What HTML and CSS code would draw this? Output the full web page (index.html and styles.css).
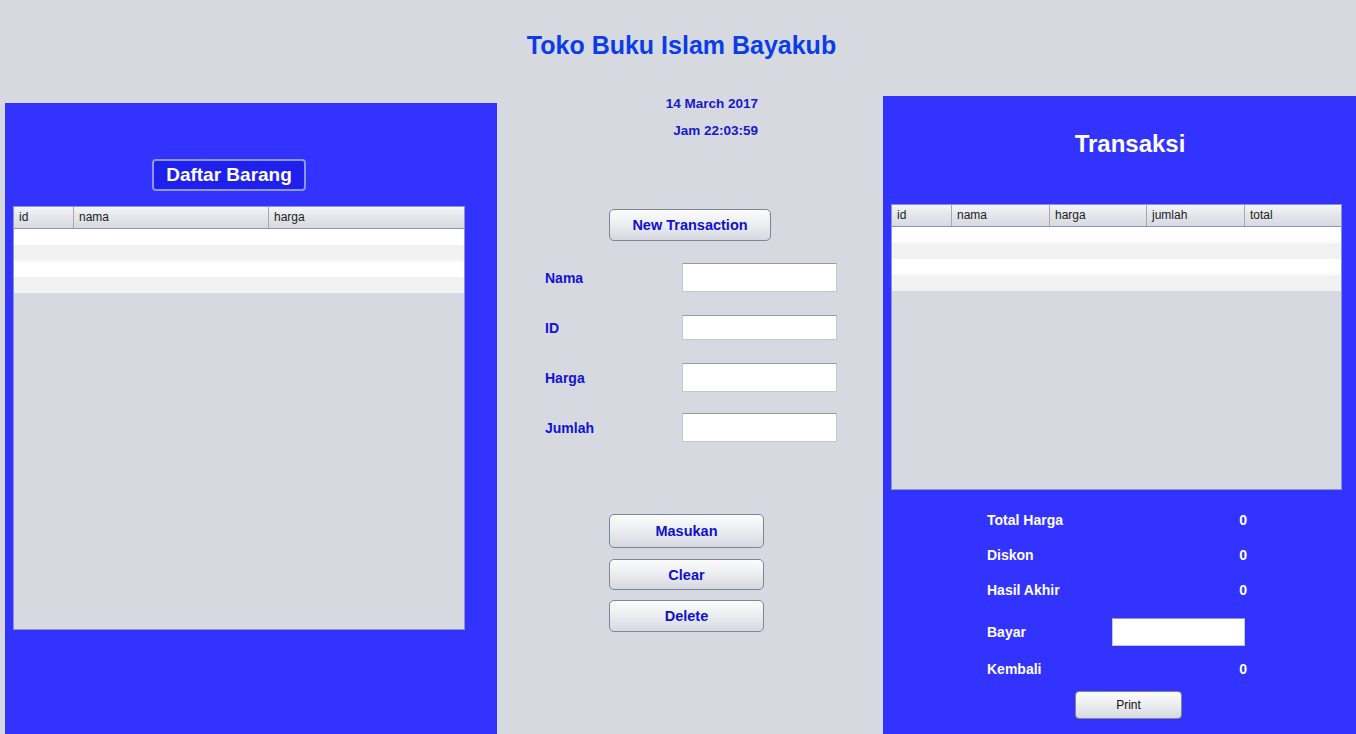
FILE: index.html
```html
<!DOCTYPE html>
<html>
<head>
<meta charset="utf-8">
<link rel="stylesheet" href="styles.css">
</head>
<body>
<div class="app">
  <header class="topbar">
    <h1 class="title">Toko Buku Islam Bayakub</h1>
  </header>
  <div class="main">
    <section class="panel panel-left">
      <div class="badge-row"><div class="badge">Daftar Barang</div></div>
      <div class="table table-left">
        <div class="thead">
          <div class="th w60">id</div>
          <div class="th w195">nama</div>
          <div class="th grow">harga</div>
        </div>
        <div class="tbody">
          <div class="tr"></div>
          <div class="tr alt"></div>
          <div class="tr"></div>
          <div class="tr alt"></div>
        </div>
      </div>
    </section>

    <section class="center">
      <div class="datetime">
        <div class="date">14 March 2017</div>
        <div class="time">Jam 22:03:59</div>
      </div>
      <button class="btn btn-new">New Transaction</button>
      <div class="form">
        <div class="frow"><span class="flabel">Nama</span><span class="input h29"></span></div>
        <div class="frow gap23"><span class="flabel">ID</span><span class="input h25"></span></div>
        <div class="frow gap23"><span class="flabel">Harga</span><span class="input h29"></span></div>
        <div class="frow gap21"><span class="flabel">Jumlah</span><span class="input h29"></span></div>
      </div>
      <div class="actions">
        <button class="btn btn-act h34">Masukan</button>
        <button class="btn btn-act h31 mt11">Clear</button>
        <button class="btn btn-act h32 mt10">Delete</button>
      </div>
    </section>

    <section class="panel panel-right">
      <h2 class="rtitle">Transaksi</h2>
      <div class="table table-right">
        <div class="thead">
          <div class="th w60">id</div>
          <div class="th w98">nama</div>
          <div class="th w97">harga</div>
          <div class="th w98">jumlah</div>
          <div class="th grow">total</div>
        </div>
        <div class="tbody">
          <div class="tr"></div>
          <div class="tr alt"></div>
          <div class="tr"></div>
          <div class="tr alt"></div>
        </div>
      </div>
      <div class="summary">
        <div class="srow r1"><span class="slabel">Total Harga</span><span class="sval">0</span></div>
        <div class="srow r2"><span class="slabel">Diskon</span><span class="sval">0</span></div>
        <div class="srow r3"><span class="slabel">Hasil Akhir</span><span class="sval">0</span></div>
        <div class="srow r4"><span class="slabel">Bayar</span><span class="sinput"></span></div>
        <div class="srow r5"><span class="slabel">Kembali</span><span class="sval">0</span></div>
      </div>
      <div class="print-row"><button class="btn-print">Print</button></div>
    </section>
  </div>
</div>
</body>
</html>
```

FILE: styles.css
```css
* { box-sizing: border-box; }
html, body { margin: 0; padding: 0; }
body {
  background: #d6d9df;
  font-family: "Liberation Sans", Arial, sans-serif;
  width: 1356px;
  height: 734px;
  overflow: hidden;
}
.app { display: flex; flex-direction: column; height: 734px; }
.topbar {
  height: 96px;
  display: flex;
  justify-content: center;
  padding-left: 7px;
}
.title {
  margin: 30px 0 0 0;
  font-size: 25px;
  line-height: 30px;
  font-weight: bold;
  color: #0a3de8;
}
.main { display: flex; align-items: flex-start; flex: 1; }

.panel { background: #3333ff; }
.panel-left {
  margin-left: 5px;
  margin-top: 7px;
  width: 492px;
  height: 631px;
  padding: 56px 0 0 8px;
}
.badge-row { padding-left: 139px; height: 47px; }
.badge {
  width: 154px;
  height: 32px;
  border: 2px solid #8c98e6;
  border-radius: 4px;
  background: #1f1fee;
  color: #fff;
  font-weight: bold;
  font-size: 19px;
  line-height: 28px;
  text-align: center;
}
.table {
  background: #d6d9df;
  border: 1px solid #8a96c8;
  display: flex;
  flex-direction: column;
}
.table-left { width: 452px; height: 424px; }
.thead {
  display: flex;
  height: 22px;
  background: linear-gradient(#f4f5f7, #e3e5ea 50%, #d7dae0);
  border-bottom: 1px solid #8e95a6;
}
.th {
  font-size: 12px;
  color: #222;
  line-height: 21px;
  padding-left: 5px;
  border-right: 1px solid #a4a9b6;
}
.th.grow { flex: 1; border-right: none; }
.w60 { width: 60px; }
.w195 { width: 195px; }
.w98 { width: 98px; }
.w97 { width: 97px; }
.tr { height: 16px; background: #ffffff; }
.tr.alt { background: #f2f2f3; }

.center { width: 386px; }
.datetime { width: 261px; text-align: right; color: #1818cc; font-weight: bold; font-size: 13.5px; }
.date { height: 16px; line-height: 16px; }
.time { height: 16px; line-height: 16px; margin-top: 11px; }
.btn {
  display: block;
  border: 1px solid #7e8594;
  border-radius: 5px;
  background: linear-gradient(#fcfcfd, #eceef1 45%, #d5d9e0);
  color: #1111cc;
  font-family: "Liberation Sans", Arial, sans-serif;
  font-weight: bold;
  font-size: 14.5px;
  padding: 0;
  margin-left: 112px;
}
.btn-new { width: 162px; height: 32px; margin-top: 70px; }
.form { margin-top: 22px; }
.frow { display: flex; align-items: center; }
.flabel {
  width: 137px;
  padding-left: 48px;
  box-sizing: content-box;
  color: #1212d6;
  font-weight: bold;
  font-size: 14px;
}
.input {
  display: block;
  width: 155px;
  background: #fff;
  border: 1px solid #c3c7cf;
  border-top-color: #979ba3;
}
.h29 { height: 29px; }
.h25 { height: 25px; }
.gap23 { margin-top: 23px; }
.gap21 { margin-top: 21px; }
.actions { margin-top: 72px; }
.btn-act { width: 155px; }
.h34 { height: 34px; }
.h31 { height: 31px; }
.h32 { height: 32px; }
.mt11 { margin-top: 11px; }
.mt10 { margin-top: 10px; }

.panel-right {
  width: 473px;
  height: 638px;
  padding: 0 0 0 8px;
}
.rtitle {
  margin: 0;
  height: 108px;
  padding-top: 33px;
  padding-left: 13px;
  text-align: center;
  color: #fff;
  font-size: 24px;
  line-height: 30px;
  font-weight: bold;
}
.table-right { width: 451px; height: 286px; }
.summary { margin-top: 15px; padding-left: 96px; color: #fff; font-weight: bold; font-size: 14px; }
.srow { display: flex; align-items: center; }
.slabel { width: 125px; }
.sval { width: 135px; text-align: right; }
.r1, .r2, .r3 { height: 30px; }
.r2, .r3 { margin-top: 5px; }
.r4 { height: 28px; margin-top: 13px; }
.r5 { height: 28px; margin-top: 9px; }
.sinput { display: block; width: 133px; height: 28px; background: #fff; border: 1px solid #c3c7cf; border-top-color: #979ba3; }
.print-row { margin-top: 8px; padding-left: 184px; }
.btn-print {
  display: block;
  width: 107px;
  height: 28px;
  border: 1px solid #7e8594;
  border-radius: 4px;
  background: linear-gradient(#fcfcfd, #eceef1 45%, #d5d9e0);
  font-family: "Liberation Sans", Arial, sans-serif;
  font-size: 12px;
  color: #111;
  padding: 0;
}
```
